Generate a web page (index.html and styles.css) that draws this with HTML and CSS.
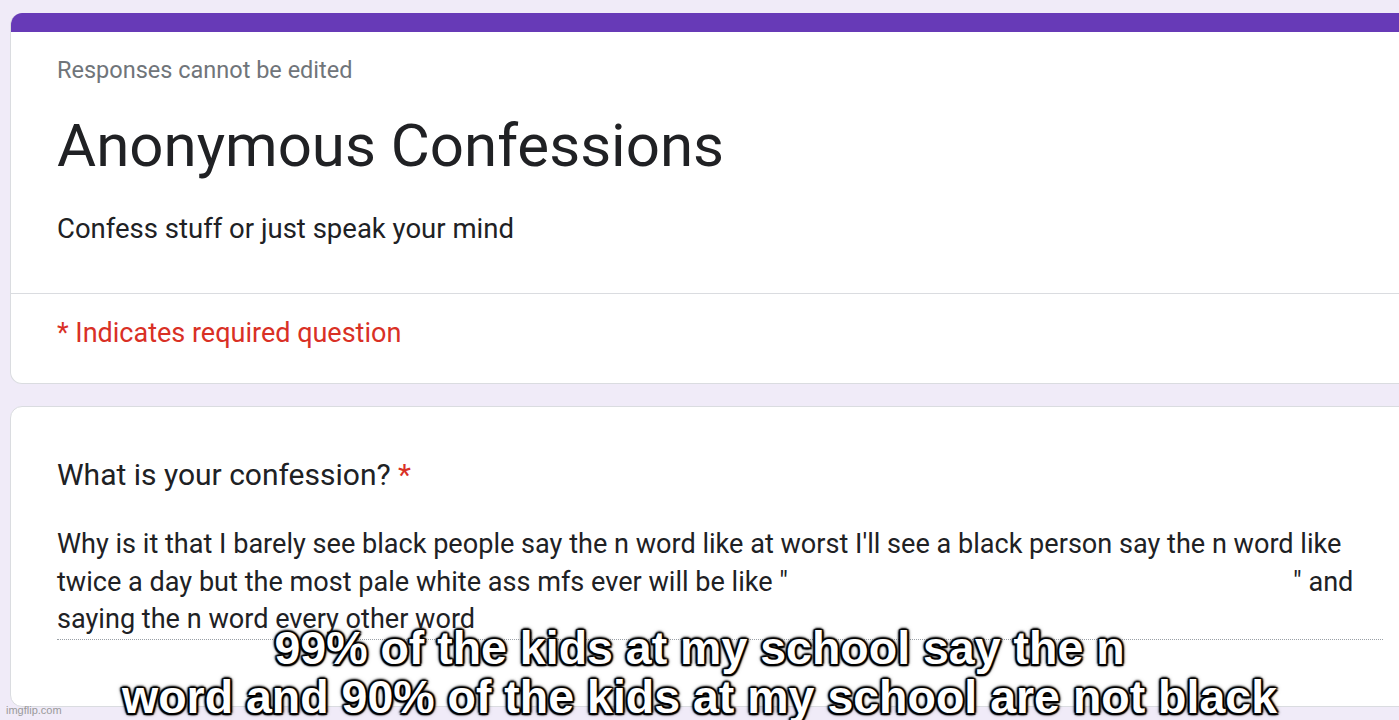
FILE: index.html
```html
<!DOCTYPE html>
<html>
<head>
<meta charset="utf-8">
<link rel="stylesheet" href="styles.css">
</head>
<body>
<div class="page">
  <div class="card header-card">
    <div class="accent"></div>
    <div class="header-body">
      <div class="note">Responses cannot be edited</div>
      <h1 class="title">Anonymous Confessions</h1>
      <div class="desc">Confess stuff or just speak your mind</div>
    </div>
    <div class="required-row">* Indicates required question</div>
  </div>
  <div class="card question-card">
    <div class="question">What is your confession? <span class="star">*</span></div>
    <div class="answer">
      <div class="line">Why is it that I barely see black people say the n word like at worst I'll see a black person say the n word like</div>
      <div class="line">twice a day but the most pale white ass mfs ever will be like "<span class="gap"></span>" and</div>
      <div class="line">saying the n word every other word</div>
    </div>
  </div>
</div>
<div class="caption">
  <div>99% of the kids at my school say the n</div>
  <div>word and 90% of the kids at my school are not black</div>
</div>
<div class="watermark">imgflip.com</div>
</body>
</html>
```
FILE: styles.css
```css
html, body {
  margin: 0;
  padding: 0;
  width: 1399px;
  height: 720px;
  overflow: hidden;
  background: #f0ebf8;
  font-family: Roboto, "Liberation Sans", sans-serif;
}
.page {
  padding: 13px 0 0 10px;
  display: flex;
  flex-direction: column;
  gap: 22px;
}
.card {
  width: 1420px;
  background: #fff;
  border: 1px solid #dadce0;
  border-radius: 12px;
  box-sizing: border-box;
  overflow: hidden;
}
.header-card {
  border-top: none;
}
.accent {
  height: 19px;
  background: #673ab7;
}
.header-body {
  padding: 24px 46px 0;
  height: 262px;
  box-sizing: border-box;
  border-bottom: 1px solid #dadce0;
}
.note {
  font-size: 23.5px;
  color: #70757a;
  line-height: 28px;
}
.title {
  margin: 26px 0 0;
  font-weight: 400;
  font-size: 60px;
  line-height: 72px;
  color: #202124;
}
.desc {
  margin-top: 30px;
  font-size: 27.5px;
  line-height: 34px;
  color: #202124;
}
.required-row {
  height: 89px;
  padding: 22px 46px 0;
  box-sizing: border-box;
  font-size: 27px;
  line-height: 34px;
  color: #d93025;
}
.question-card {
  height: 301px;
  padding: 49px 46px 0;
}
.question {
  font-size: 30px;
  line-height: 38px;
  color: #202124;
}
.star {
  color: #d93025;
}
.answer {
  margin-top: 32px;
  font-size: 27.1px;
  line-height: 37.5px;
  color: #202124;
  border-bottom: 1px dotted #9aa0a6;
  padding-bottom: 0;
}
.line {
  white-space: nowrap;
}
.gap {
  display: inline-block;
  width: 505px;
}
.caption {
  position: absolute;
  left: 0;
  right: 0;
  top: 624px;
  text-align: center;
  font-family: "Liberation Sans", Arial, sans-serif;
  font-weight: 700;
  font-size: 46.5px;
  line-height: 49px;
  color: #fff;
  text-shadow: -1.5px -1.5px 1px #000, 1.5px -1.5px 1px #000, -1.5px 1.5px 1px #000, 1.5px 1.5px 1px #000, 0 2px 2px #000, 0 -2px 2px #000, 2px 0 2px #000, -2px 0 2px #000, 0 0 5px rgba(0,0,0,0.7);
}
.watermark {
  position: absolute;
  left: 6px;
  top: 704px;
  font-family: "Liberation Sans", Arial, sans-serif;
  font-size: 11px;
  color: #9a9a9a;
}
```
